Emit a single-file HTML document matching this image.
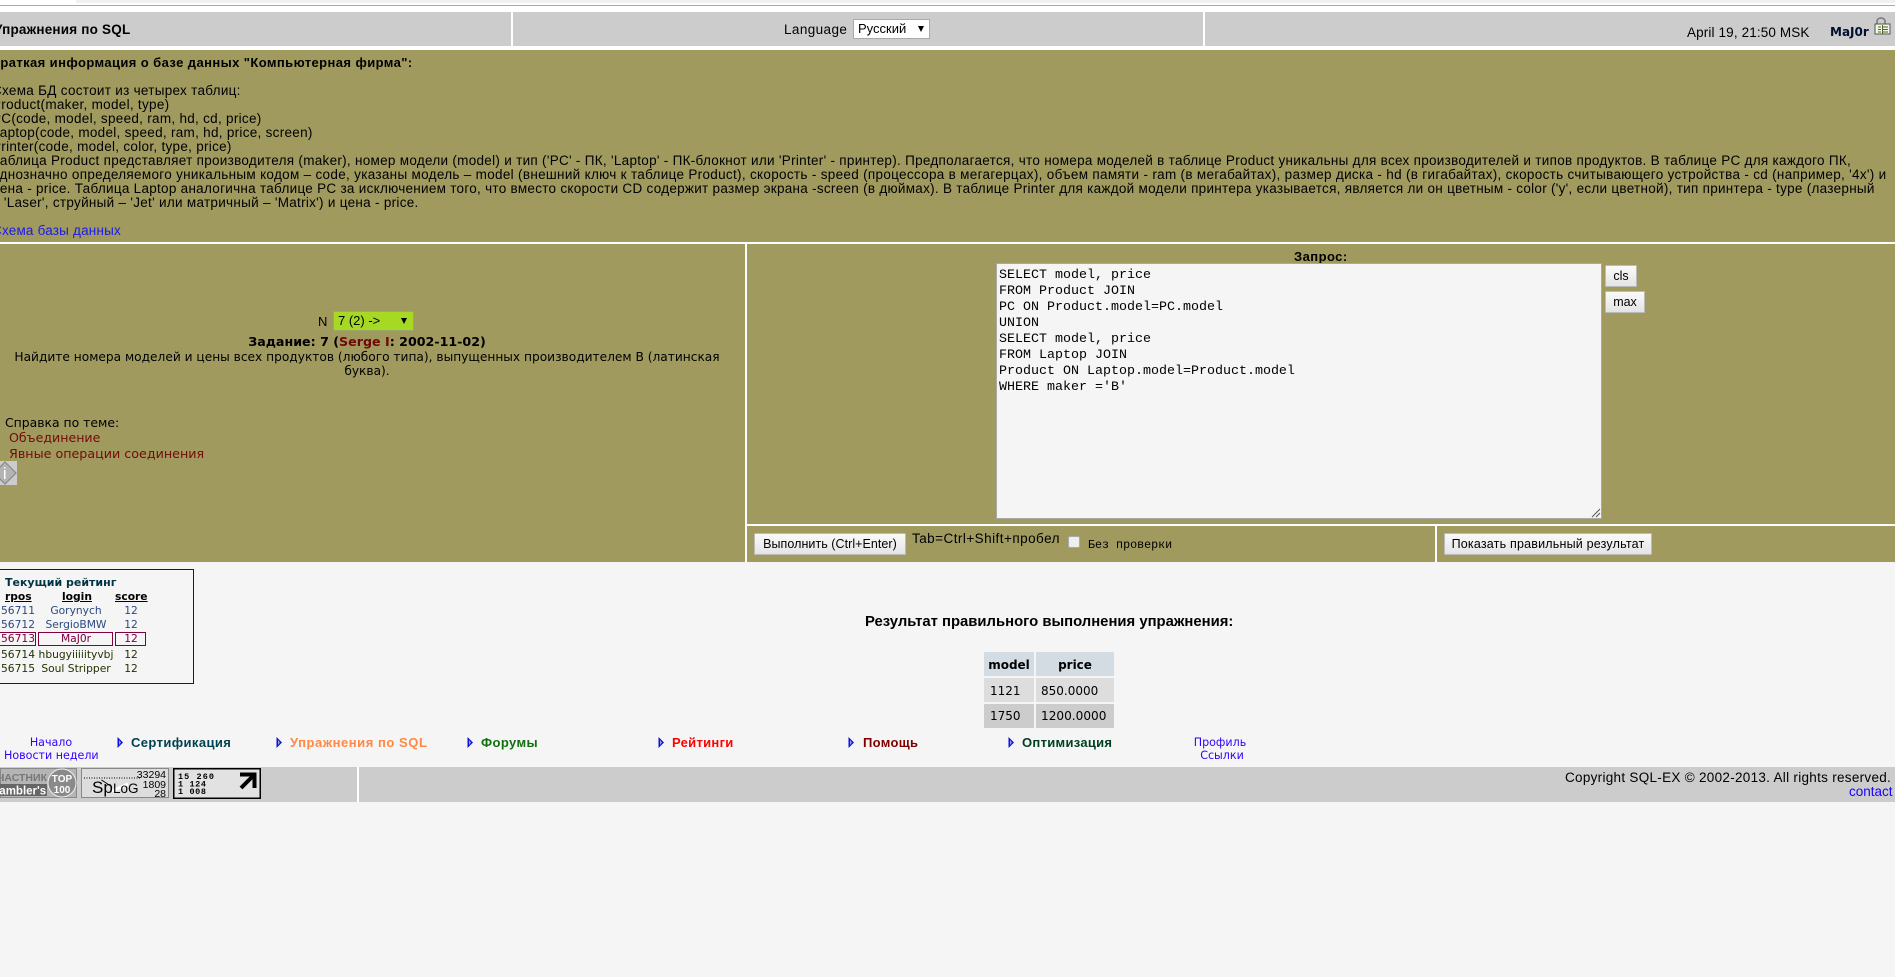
<!DOCTYPE html>
<html lang="ru"><head><meta charset="utf-8"><title>Упражнения по SQL</title>
<style>
html,body{margin:0;padding:0;background:#f5f5f5;width:1895px;height:977px;overflow:hidden}
#p{position:relative;width:1895px;height:977px;overflow:hidden;background:#f5f5f5;font:13px/14px "Liberation Sans",sans-serif;color:#000}
.b{position:absolute}
.t{position:absolute;white-space:nowrap;line-height:14px;height:14px}
.a{font-size:13.5px;letter-spacing:.29px}
.c{transform:translateX(-50%)}
.d{font-family:"DejaVu Sans",sans-serif}
.btn{position:absolute;box-sizing:border-box;background:linear-gradient(#fafafa,#e4e4e4);border:1px solid #bbb;border-radius:1px;text-align:center;font:12.5px "Liberation Sans",sans-serif;color:#000;white-space:nowrap}
.r{font-size:10.7px;font-family:"DejaVu Sans",sans-serif}
.nav{font-weight:bold;font-size:13px;font-family:"Liberation Sans",sans-serif;letter-spacing:.4px}
.lnk{font-size:11.1px;font-family:"DejaVu Sans",sans-serif;color:#3300ff}
a{color:inherit;text-decoration:none}
</style></head><body><div id="p">
<div class="b" style="left:0;top:0;width:1895px;height:12px;background:#fff"></div>
<div class="b" style="left:76px;top:0;width:1819px;height:3px;background:#f1f1f1"></div>
<div class="b" style="left:0;top:5px;width:1895px;height:1px;background:#aaa"></div>

<div class="b" style="left:0;top:12px;width:1895px;height:34px;background:#ccc"></div>
<div class="b" style="left:511px;top:12px;width:2px;height:34px;background:#fff"></div>
<div class="b" style="left:1203px;top:12px;width:2px;height:34px;background:#fff"></div>
<div class="b" style="left:0;top:46px;width:1895px;height:4px;background:#fff"></div>

<div class="t" style="left:-6px;top:23px;font-weight:bold;font-size:13.5px;letter-spacing:.2px">Упражнения по SQL</div>
<div class="t a" style="left:784px;top:23px;letter-spacing:.4px">Language</div>
<div class="b" style="left:853px;top:19px;width:77px;height:20px;box-sizing:border-box;background:#fff;border:1px solid #aaa"></div>
<div class="t" style="left:858px;top:22px">Русский</div>
<div class="b" style="left:918px;top:26px;width:0;height:0;border-left:3px solid transparent;border-right:3px solid transparent;border-top:6px solid #000"></div>
<div class="t a" style="left:1687px;top:26px;letter-spacing:.13px">April 19, 21:50 MSK</div>
<div class="t d" style="left:1830px;top:25px;font-weight:bold;font-size:12px;color:#001030">MaJ0r</div>
<svg class="b" style="left:1873px;top:17px" width="20" height="18" viewBox="0 0 20 18"><path d="M4 8V4.5C4 2 6 1 8 1s4 1 4 3.5V8" fill="none" stroke="#777" stroke-width="1.5"/><rect x="2" y="7" width="15" height="10" fill="#f4f4e8" stroke="#555"/><path d="M5 10h3M5 12.5h3M5 15h3M10 10h5M10 12.5h5M10 15h5M9.5 8v9" stroke="#4a6a20"/></svg>

<div class="b" style="left:0;top:50px;width:1895px;height:192px;background:#a09a5f"></div>
<div class="b" style="left:0;top:242px;width:1895px;height:2px;background:#fff"></div>
<div class="t" style="left:-8px;top:56px;font-weight:bold;font-size:13px;letter-spacing:.41px">Краткая информация о базе данных "Компьютерная фирма":</div>
<div class="t a" style="left:-8px;top:84px">Схема БД состоит из четырех таблиц:</div>
<div class="t a" style="left:-8px;top:98px">Product(maker, model, type)</div>
<div class="t a" style="left:-8px;top:112px">PC(code, model, speed, ram, hd, cd, price)</div>
<div class="t a" style="left:-8px;top:126px">Laptop(code, model, speed, ram, hd, price, screen)</div>
<div class="t a" style="left:-8px;top:140px">Printer(code, model, color, type, price)</div>
<div class="t a" style="left:-8px;top:154px">Таблица Product представляет производителя (maker), номер модели (model) и тип ('PC' - ПК, 'Laptop' - ПК-блокнот или 'Printer' - принтер). Предполагается, что номера моделей в таблице Product уникальны для всех производителей и типов продуктов. В таблице PC для каждого ПК,</div>
<div class="t a" style="left:-8px;top:168px;letter-spacing:.31px">однозначно определяемого уникальным кодом – code, указаны модель – model (внешний ключ к таблице Product), скорость - speed (процессора в мегагерцах), объем памяти - ram (в мегабайтах), размер диска - hd (в гигабайтах), скорость считывающего устройства - cd (например, '4x') и</div>
<div class="t a" style="left:-8px;top:182px;letter-spacing:.28px">цена - price. Таблица Laptop аналогична таблице PC за исключением того, что вместо скорости CD содержит размер экрана -screen (в дюймах). В таблице Printer для каждой модели принтера указывается, является ли он цветным - color ('y', если цветной), тип принтера - type (лазерный</div>
<div class="t a" style="left:-8px;top:196px">– 'Laser', струйный – 'Jet' или матричный – 'Matrix') и цена - price.</div>
<div class="t a" style="left:-8px;top:224px;color:#1a1aee;letter-spacing:.2px">Схема базы данных</div>

<div class="b" style="left:0;top:244px;width:1895px;height:318px;background:#a09a5f"></div>
<div class="b" style="left:745px;top:244px;width:2px;height:318px;background:#fff"></div>
<div class="b" style="left:747px;top:524px;width:1148px;height:2px;background:#fff"></div>
<div class="b" style="left:1435px;top:526px;width:2px;height:36px;background:#fff"></div>

<div class="t" style="left:318px;top:315px">N</div>
<div class="b" style="left:333px;top:311px;width:81px;height:20px;box-sizing:border-box;background:#a6d923;border:1px solid #9aa86a"></div>
<div class="t" style="left:338px;top:314px">7 (2) -&gt;</div>
<div class="b" style="left:401px;top:318px;width:0;height:0;border-left:3px solid transparent;border-right:3px solid transparent;border-top:6px solid #000"></div>
<div class="t d c" style="left:367px;top:335px;font-weight:bold;font-size:12.65px">Задание: 7 (<span style="color:#700808">Serge I</span>: 2002-11-02)</div>
<div class="t d c" style="left:367px;top:350px;font-size:12.2px">Найдите номера моделей и цены всех продуктов (любого типа), выпущенных производителем B (латинская</div>
<div class="t d c" style="left:367px;top:364px;font-size:12.2px">буква).</div>
<div class="t d" style="left:5px;top:416px;font-size:12.4px">Справка по теме:</div>
<div class="t d" style="left:9px;top:431px;font-size:12.6px;color:#750a0a">Объединение</div>
<div class="t d" style="left:9px;top:447px;font-size:12.7px;color:#750a0a">Явные операции соединения</div>
<svg class="b" style="left:0;top:461px" width="17" height="24" viewBox="0 0 17 24"><rect width="17" height="24" fill="#ccc"/><path d="M5 1L16 12 5 23-6 12Z" fill="#b4b4b4" stroke="#888" stroke-width="1.2"/><rect x="4" y="9" width="1.5" height="9" fill="#fff"/><rect x="4" y="6" width="1.5" height="1.5" fill="#fff"/></svg>

<div class="t" style="left:1294px;top:250px;font-weight:bold;font-size:13px;letter-spacing:.45px">Запрос:</div>
<div class="b" style="left:996px;top:263px;width:606px;height:256px;box-sizing:border-box;background:#f5f5f5;border:1px solid #a9a9a9"></div>
<div class="b" style="left:999px;top:268px;font:13.33px/16px 'Liberation Mono',monospace;white-space:pre;color:#000">SELECT model, price
FROM Product JOIN
PC ON Product.model=PC.model
UNION
SELECT model, price
FROM Laptop JOIN
Product ON Laptop.model=Product.model
WHERE maker ='B'</div>
<svg class="b" style="left:1591px;top:508px" width="10" height="10"><path d="M1 9L9 1M5 9L9 5" stroke="#555"/></svg>
<div class="btn" style="left:1605px;top:265px;width:32px;height:22px;line-height:21px">cls</div>
<div class="btn" style="left:1605px;top:291px;width:40px;height:22px;line-height:21px">max</div>
<div class="btn" style="left:754px;top:533px;width:152px;height:22px;line-height:21px;letter-spacing:.05px">Выполнить (Ctrl+Enter)</div>
<div class="t a" style="left:912px;top:532px;letter-spacing:.46px">Tab=Ctrl+Shift+пробел</div>
<div class="b" style="left:1068px;top:536px;width:12px;height:12px;box-sizing:border-box;background:#eee;border:1px solid #aaa;border-radius:2px"></div>
<div class="t" style="left:1088px;top:538px;font:11.7px/14px 'Liberation Mono',monospace">Без проверки</div>
<div class="btn" style="left:1444px;top:533px;width:208px;height:22px;line-height:21px;letter-spacing:.2px">Показать правильный результат</div>

<div class="b" style="left:-2px;top:569px;width:196px;height:115px;box-sizing:border-box;border:1px solid #003300"></div>
<div class="t r" style="left:5px;top:576px;font-weight:bold;font-size:11px;color:#003344">Текущий рейтинг</div>
<div class="t r" style="left:5px;top:590px;font-weight:bold;text-decoration:underline">rpos</div>
<div class="t r" style="left:62px;top:590px;font-weight:bold;text-decoration:underline">login</div>
<div class="t r" style="left:115px;top:590px;font-weight:bold;text-decoration:underline">score</div>

<div class="t r" style="left:1px;top:604px;color:#2a4a80">56711</div><div class="t r c" style="left:76px;top:604px;color:#2a4a80">Gorynych</div><div class="t r c" style="left:131px;top:604px;color:#2a4a80">12</div>
<div class="t r" style="left:1px;top:618px;color:#2a4a80">56712</div><div class="t r c" style="left:76px;top:618px;color:#2a4a80">SergioBMW</div><div class="t r c" style="left:131px;top:618px;color:#2a4a80">12</div>
<div class="b" style="left:-2px;top:632px;width:38px;height:14px;box-sizing:border-box;border:1px solid #800040"></div>
<div class="b" style="left:38px;top:632px;width:75px;height:14px;box-sizing:border-box;border:1px solid #800040"></div>
<div class="b" style="left:115px;top:632px;width:31px;height:14px;box-sizing:border-box;border:1px solid #800040"></div>
<div class="t r" style="left:1px;top:632px;color:#800040">56713</div><div class="t r c" style="left:76px;top:632px;color:#800040">MaJ0r</div><div class="t r c" style="left:131px;top:632px;color:#800040">12</div>
<div class="t r" style="left:1px;top:648px;color:#223300">56714</div><div class="t r c" style="left:76px;top:648px;color:#223300">hbugyiiiiityvbj</div><div class="t r c" style="left:131px;top:648px;color:#223300">12</div>
<div class="t r" style="left:1px;top:662px;color:#223300">56715</div><div class="t r c" style="left:76px;top:662px;color:#223300">Soul Stripper</div><div class="t r c" style="left:131px;top:662px;color:#223300">12</div>

<div class="t" style="left:865px;top:615px;font-weight:bold;font-size:14.85px">Результат правильного выполнения упражнения:</div>
<div class="b" style="left:984px;top:652px;width:50px;height:24px;background:#d3dbe3"></div>
<div class="b" style="left:1036px;top:652px;width:78px;height:24px;background:#d3dbe3"></div>
<div class="b" style="left:984px;top:678px;width:50px;height:24px;background:#ddd"></div>
<div class="b" style="left:1036px;top:678px;width:78px;height:24px;background:#ddd"></div>
<div class="b" style="left:984px;top:704px;width:50px;height:24px;background:#ccc"></div>
<div class="b" style="left:1036px;top:704px;width:78px;height:24px;background:#ccc"></div>
<div class="t d c" style="left:1009px;top:658px;font-weight:bold;font-size:12px">model</div>
<div class="t d c" style="left:1075px;top:658px;font-weight:bold;font-size:12px">price</div>
<div class="t d" style="left:990px;top:684px;font-size:12px">1121</div>
<div class="t d" style="left:1041px;top:684px;font-size:12px">850.0000</div>
<div class="t d" style="left:990px;top:709px;font-size:12px">1750</div>
<div class="t d" style="left:1041px;top:709px;font-size:12.1px">1200.0000</div>

<div class="t lnk c" style="left:51px;top:736px">Начало</div>
<div class="t lnk" style="left:4px;top:749px">Новости недели</div>
<svg class="b" style="left:117px;top:737px" width="6" height="11"><path d="M.5 0V11L6 5.5Z" fill="#1010e0"/><path d="M2 3V8L4 5.5Z" fill="#8ac"/></svg>
<svg class="b" style="left:276px;top:737px" width="6" height="11"><path d="M.5 0V11L6 5.5Z" fill="#1010e0"/><path d="M2 3V8L4 5.5Z" fill="#8ac"/></svg>
<svg class="b" style="left:467px;top:737px" width="6" height="11"><path d="M.5 0V11L6 5.5Z" fill="#1010e0"/><path d="M2 3V8L4 5.5Z" fill="#8ac"/></svg>
<svg class="b" style="left:658px;top:737px" width="6" height="11"><path d="M.5 0V11L6 5.5Z" fill="#1010e0"/><path d="M2 3V8L4 5.5Z" fill="#8ac"/></svg>
<svg class="b" style="left:848px;top:737px" width="6" height="11"><path d="M.5 0V11L6 5.5Z" fill="#1010e0"/><path d="M2 3V8L4 5.5Z" fill="#8ac"/></svg>
<svg class="b" style="left:1008px;top:737px" width="6" height="11"><path d="M.5 0V11L6 5.5Z" fill="#1010e0"/><path d="M2 3V8L4 5.5Z" fill="#8ac"/></svg>
<div class="t nav" style="left:131px;top:736px;color:#004050">Сертификация</div>
<div class="t nav" style="left:290px;top:736px;color:#ff8844;letter-spacing:.55px">Упражнения по SQL</div>
<div class="t nav" style="left:481px;top:736px;color:#107010">Форумы</div>
<div class="t nav" style="left:672px;top:736px;color:#f00;letter-spacing:.3px">Рейтинги</div>
<div class="t nav" style="left:863px;top:736px;color:#800000;letter-spacing:.3px">Помощь</div>
<div class="t nav" style="left:1022px;top:736px;color:#004020;letter-spacing:.3px">Оптимизация</div>
<div class="t lnk c" style="left:1220px;top:736px">Профиль</div>
<div class="t lnk c" style="left:1222px;top:749px">Ссылки</div>

<div class="b" style="left:0;top:767px;width:1895px;height:35px;background:#ccc"></div>
<div class="b" style="left:357px;top:767px;width:2px;height:35px;background:#fff"></div>

<svg class="b" style="left:0;top:768px" width="77" height="30" viewBox="0 0 77 30" font-family="Liberation Sans,sans-serif"><rect width="77" height="30" fill="#b4b4b4"/><rect x=".5" y=".5" width="76" height="29" fill="none" stroke="#888"/><text x="-3" y="13" font-size="10.5" font-weight="bold" fill="#777">ЧАСТНИК</text><rect x="0" y="16" width="47" height="12" fill="#666"/><text x="-9" y="26.5" font-size="11.5" font-weight="bold" fill="#fff">Rambler's</text><circle cx="62" cy="15" r="14" fill="#8a8a8a" stroke="#eee"/><text x="62" y="14" font-size="10" font-weight="bold" fill="#fff" text-anchor="middle">TOP</text><text x="62" y="25" font-size="10" font-weight="bold" fill="#fff" text-anchor="middle">100</text></svg>

<svg class="b" style="left:81px;top:768px" width="88" height="30" viewBox="0 0 88 30" font-family="Liberation Sans,sans-serif"><rect width="88" height="30" fill="#ddd"/><rect x=".5" y=".5" width="87" height="29" fill="none" stroke="#888"/><path d="M3 10H59" stroke="#000" stroke-dasharray="1 1.5"/><path d="M31 23L47 16" stroke="#fff" stroke-width="3"/><text x="85" y="10" font-size="10.5" fill="#000" text-anchor="end">33294</text><text x="85" y="20" font-size="10.5" fill="#000" text-anchor="end">1809</text><text x="85" y="29" font-size="10.5" fill="#000" text-anchor="end">28</text><text x="11" y="25" font-size="17" fill="#000">Sp</text><text x="32" y="25" font-size="13.5" fill="#000">LoG</text><path d="M20.5 12L30.5 18.5" stroke="#000"/></svg>

<svg class="b" style="left:173px;top:768px" width="88" height="31" viewBox="0 0 88 31" font-family="Liberation Mono,monospace"><rect x=".75" y=".75" width="86.5" height="29.5" fill="#e2e2e2" stroke="#000" stroke-width="1.5"/><text x="5" y="11" font-size="8.5" font-weight="bold" fill="#000" textLength="36">15 260</text><text x="5" y="18.5" font-size="8.5" font-weight="bold" fill="#000" textLength="28">1 124</text><text x="5" y="26" font-size="8.5" font-weight="bold" fill="#000" textLength="28">1 008</text><path d="M67 6.5H81.5V20M80 8L68 20" fill="none" stroke="#000" stroke-width="4"/></svg>

<div class="t a" style="left:1565px;top:771px">Copyright SQL-EX © 2002-2013. All rights reserved.</div>
<div class="t" style="left:1849px;top:785px;color:#1a00ff;font-size:13.5px">contact</div>
</div></body></html>
